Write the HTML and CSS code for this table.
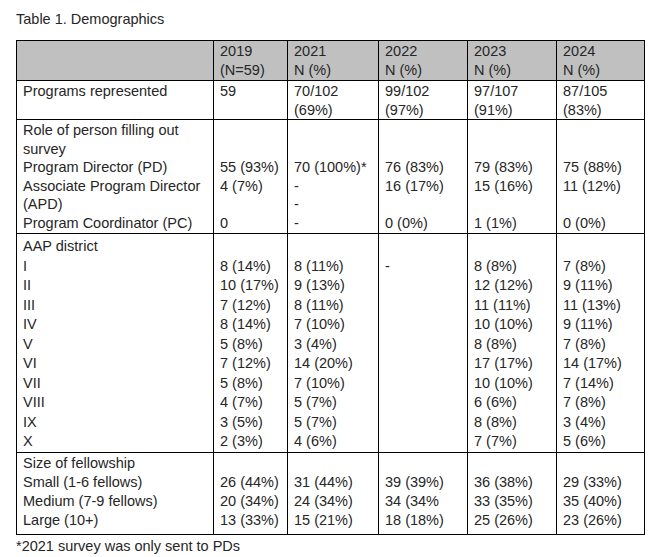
FILE: index.html
```html
<!DOCTYPE html>
<html lang="en">
<head>
<meta charset="utf-8">
<title>Table 1. Demographics</title>
<link rel="stylesheet" href="styles.css">
</head>
<body>
<div class="page">
  <p class="caption">Table 1. Demographics</p>
  <table class="demo">
    <colgroup>
      <col class="c-label">
      <col class="c-2019">
      <col class="c-2021">
      <col class="c-2022">
      <col class="c-2023">
      <col class="c-2024">
    </colgroup>
    <thead>
      <tr class="r-head">
        <th></th>
        <th>2019<br>(N=59)</th>
        <th>2021<br>N (%)</th>
        <th>2022<br>N (%)</th>
        <th>2023<br>N (%)</th>
        <th>2024<br>N (%)</th>
      </tr>
    </thead>
    <tbody>
      <tr class="r-prog">
        <td>Programs represented</td>
        <td>59</td>
        <td>70/102<br>(69%)</td>
        <td>99/102<br>(97%)</td>
        <td>97/107<br>(91%)</td>
        <td>87/105<br>(83%)</td>
      </tr>
      <tr class="r-role">
        <td>Role of person filling out<br>survey<br>Program Director (PD)<br>Associate Program Director<br>(APD)<br>Program Coordinator (PC)</td>
        <td><br><br>55 (93%)<br>4 (7%)<br><br>0</td>
        <td><br><br>70 (100%)*<br>-<br>-<br>-</td>
        <td><br><br>76 (83%)<br>16 (17%)<br><br>0 (0%)</td>
        <td><br><br>79 (83%)<br>15 (16%)<br><br>1 (1%)</td>
        <td><br><br>75 (88%)<br>11 (12%)<br><br>0 (0%)</td>
      </tr>
      <tr class="r-aap">
        <td>AAP district<br>I<br>II<br>III<br>IV<br>V<br>VI<br>VII<br>VIII<br>IX<br>X</td>
        <td><br>8 (14%)<br>10 (17%)<br>7 (12%)<br>8 (14%)<br>5 (8%)<br>7 (12%)<br>5 (8%)<br>4 (7%)<br>3 (5%)<br>2 (3%)</td>
        <td><br>8 (11%)<br>9 (13%)<br>8 (11%)<br>7 (10%)<br>3 (4%)<br>14 (20%)<br>7 (10%)<br>5 (7%)<br>5 (7%)<br>4 (6%)</td>
        <td><br>-</td>
        <td><br>8 (8%)<br>12 (12%)<br>11 (11%)<br>10 (10%)<br>8 (8%)<br>17 (17%)<br>10 (10%)<br>6 (6%)<br>8 (8%)<br>7 (7%)</td>
        <td><br>7 (8%)<br>9 (11%)<br>11 (13%)<br>9 (11%)<br>7 (8%)<br>14 (17%)<br>7 (14%)<br>7 (8%)<br>3 (4%)<br>5 (6%)</td>
      </tr>
      <tr class="r-size">
        <td>Size of fellowship<br>Small (1-6 fellows)<br>Medium (7-9 fellows)<br>Large (10+)</td>
        <td><br>26 (44%)<br>20 (34%)<br>13 (33%)</td>
        <td><br>31 (44%)<br>24 (34%)<br>15 (21%)</td>
        <td><br>39 (39%)<br>34 (34%<br>18 (18%)</td>
        <td><br>36 (38%)<br>33 (35%)<br>25 (26%)</td>
        <td><br>29 (33%)<br>35 (40%)<br>23 (26%)</td>
      </tr>
    </tbody>
  </table>
  <p class="note">*2021 survey was only sent to PDs</p>
</div>
</body>
</html>
```

FILE: styles.css
```css
html, body {
  margin: 0;
  padding: 0;
  background: #ffffff;
}

.page {
  padding: 10px 0 0 16px;
  font-family: "Liberation Sans", Arial, sans-serif;
  font-size: 14.5px;
  color: #262626;
}

.caption {
  margin: 0 0 12px 0;
  line-height: 18px;
}

.demo {
  border-collapse: collapse;
  table-layout: fixed;
  width: 628px;
}

.c-label { width: 197px; }
.c-2019 { width: 74px; }
.c-2021 { width: 91px; }
.c-2022 { width: 89px; }
.c-2023 { width: 89px; }
.c-2024 { width: 88px; }

.demo th,
.demo td {
  border: 1px solid #000000;
  padding: 1px 5px 0 6px;
  vertical-align: top;
  text-align: left;
  font-weight: normal;
  line-height: 19px;
  white-space: nowrap;
}

.demo th {
  background: #c0c0c0;
}

.r-prog td {
  line-height: 18.5px;
}

.r-role td {
  line-height: 18.5px;
  padding-bottom: 1px;
}

.r-aap td {
  line-height: 19.5px;
  padding-top: 3px;
}

.r-size td {
  padding-bottom: 4px;
}

.note {
  margin: 2px 0 0 0;
  line-height: 18px;
}
```
